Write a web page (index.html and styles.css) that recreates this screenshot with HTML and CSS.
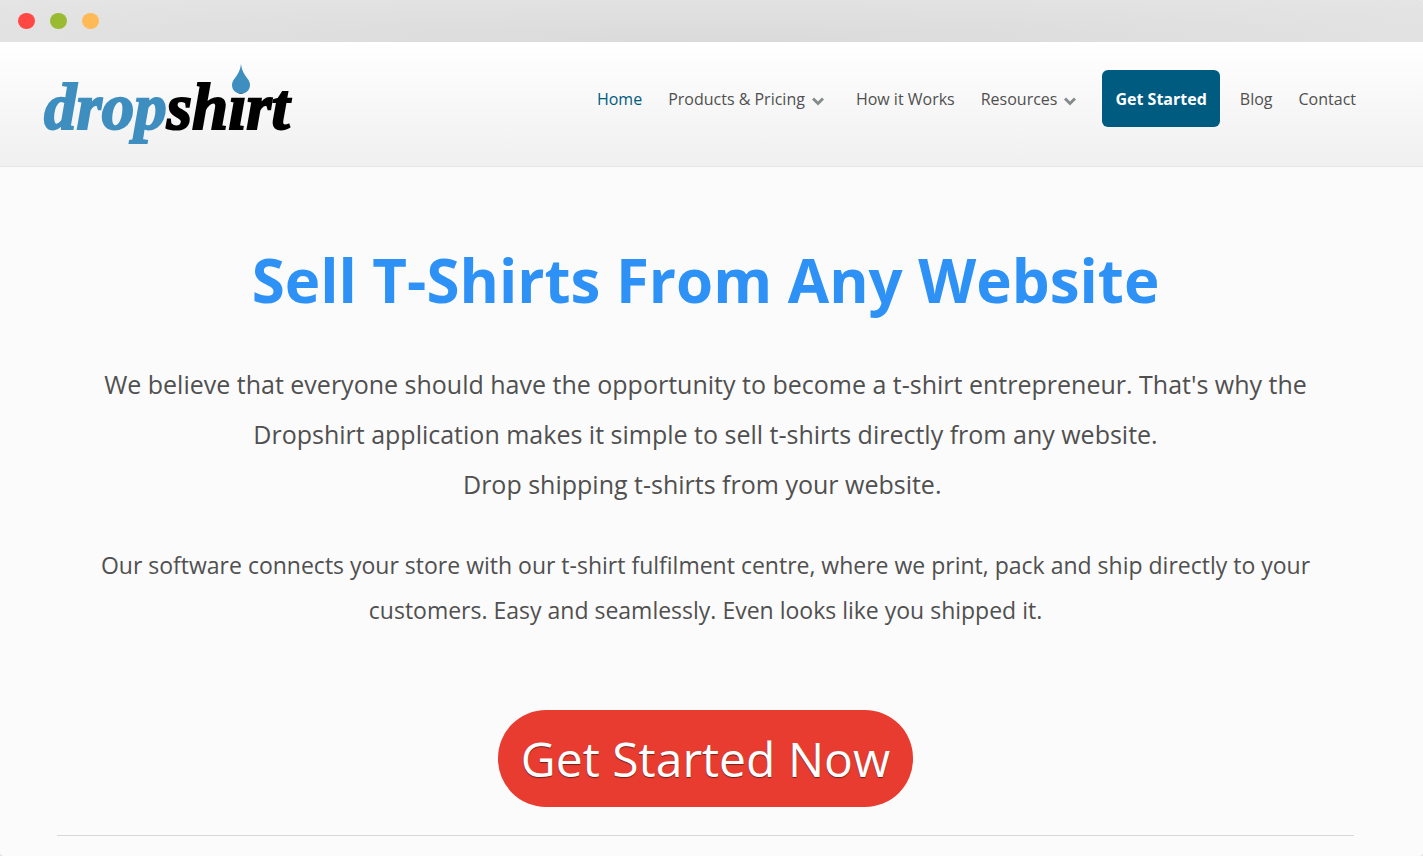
FILE: index.html
```html
<!DOCTYPE html>
<html lang="en">
<head>
    <meta charset="UTF-8">
    <meta name="viewport" content="width=device-width, initial-scale=1.0">
    <title>Dropshirt</title>
    <link rel="stylesheet" href="styles.css">
</head>
<body>
    <div class="window">
        <div class="title-bar">
            <span class="dot red"></span>
            <span class="dot green"></span>
            <span class="dot orange"></span>
        </div>
        <header class="header">
            <a class="logo" href="#"><span class="logo-drop">drop</span><span>sh</span><span class="logo-i">i<svg class="drop-icon" width="18" height="30" viewBox="0 0 18 30" aria-hidden="true"><path d="M9 0C9.600 6 12 10 15 14C17 16.500 18 18.500 18 21C18 26 14 29.500 9 29.500S0 26 0 21C0 18.500 1 16.500 3 14C6 10 8.400 6 9 0Z" fill="#3e8ebf"/></svg></span><span>rt</span></a>
            <nav class="nav">
                <a class="active" href="#">Home</a>
                <a class="has-menu" href="#">Products &amp; Pricing
                    <svg class="arrow" width="12" height="9" viewBox="0 0 12 9" aria-hidden="true"><path d="M1 1.500L6 6.500L11 1.500"/></svg>
                </a>
                <a href="#">How it Works</a>
                <a class="has-menu" href="#">Resources
                    <svg class="arrow" width="12" height="9" viewBox="0 0 12 9" aria-hidden="true"><path d="M1 1.500L6 6.500L11 1.500"/></svg>
                </a>
                <a class="nav-button" href="#">Get Started</a>
                <a href="#">Blog</a>
                <a href="#">Contact</a>
            </nav>
        </header>
        <main class="content">
            <h1 class="title">Sell T-Shirts From Any Website</h1>
            <p class="intro">We believe that everyone should have the opportunity to become a t-shirt entrepreneur. That's why the Dropshirt application makes it simple to sell t-shirts directly from any website.<br>Drop shipping t-shirts from your website.&nbsp;</p>
            <p class="details">Our software connects your store with our t-shirt fulfilment centre, where we print, pack and ship directly to your customers. Easy and seamlessly. Even looks like you shipped it.</p>
            <a class="start" href="#">Get Started Now</a>
            <hr class="divider">
        </main>
    </div>
</body>
</html>
```
FILE: styles.css
```css
html {
    background-color: #e2e2e2;
}
body {
    margin: 0;
    font-family: "Open Sans", "Noto Sans", sans-serif;
    color: #505050;
}
a {
    color: inherit;
    text-decoration: none;
}
.window {
    min-height: 100vh;
    border-radius: 4px;
    background-color: #fbfbfb;
    overflow: hidden;
}
.title-bar {
    display: flex;
    align-items: center;
    gap: 15px;
    height: 42px;
    padding-left: 18px;
    background: radial-gradient(ellipse at bottom, #dadada, #e5e5e5);
}
.dot {
    width: 17px;
    height: 16px;
    border-radius: 50%;
}
.red {
    background-color: #ff4844;
}
.green {
    background-color: #9aba32;
}
.orange {
    background-color: #ffba57;
}
.header {
    display: flex;
    align-items: center;
    justify-content: space-between;
    height: 124px;
    padding: 0 67px 0 44px;
    border-bottom: 1px solid #e6e6e6;
    background: linear-gradient(#ffffff, #f0f0f0);
}
.logo {
    padding-top: 6px;
    font-family: "Liberation Serif", serif;
    font-size: 65px;
    font-style: italic;
    font-weight: 700;
    line-height: 80px;
    color: #000000;
    -webkit-text-stroke: 2px currentColor;
}
.logo-drop {
    color: #3e8ebf;
}
.logo-i {
    position: relative;
}
/* the drop sits over the dot of the i */
.drop-icon {
    position: absolute;
    top: -7px;
    left: 4px;
}
.nav {
    display: flex;
    align-items: center;
    gap: 26px;
    padding-bottom: 11px;
    font-size: 16px;
    line-height: 55px;
}
.nav a {
    padding-top: 2px;
}
.nav .active {
    color: #005b80;
}
.nav .has-menu {
    display: flex;
    align-items: center;
    gap: 7px;
    padding-right: 6px;
}
.arrow {
    margin-top: 4px;
    fill: none;
    stroke: #858b8b;
    stroke-width: 3;
}
.nav .nav-button {
    margin: 0 -6px;
    padding: 2px 13px 0;
    border-radius: 6px;
    background-color: #005b80;
    color: #ffffff;
    font-weight: 700;
}
.content {
    display: flex;
    flex-direction: column;
    align-items: center;
    padding: 73px 69px 20px 57px;
    text-align: center;
}
.title {
    margin: 0 0 39px;
    font-size: 60px;
    line-height: 80px;
    color: #2d91f6;
}
.intro {
    margin: 0 0 34px;
    padding: 0 40px;
    font-size: 25px;
    line-height: 50px;
}
.details {
    margin: 0 0 77px;
    padding: 0 40px;
    font-size: 23px;
    line-height: 45px;
}
.start {
    padding: 0 23px;
    border-radius: 48px;
    background-color: #e93c31;
    color: #ffffff;
    font-size: 48px;
    line-height: 97px;
    text-shadow: 0 1px 1px rgba(0, 0, 0, 0.5);
}
.divider {
    width: 100%;
    margin: 28px 0 0;
    border: 0;
    border-top: 1px solid #d8d8d8;
}
```
